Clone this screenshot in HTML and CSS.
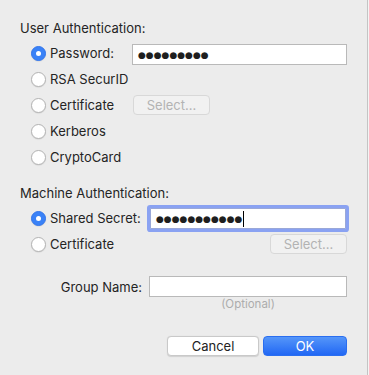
FILE: index.html
```html
<!DOCTYPE html>
<html lang="en">
<head>
    <meta charset="UTF-8">
    <meta name="viewport" content="width=device-width, initial-scale=1.0">
    <title>Authentication</title>
    <link rel="stylesheet" href="styles.css">
</head>
<body>
    <div class="dialog">
        <div class="section-title first">User Authentication:</div>
        <div class="option">
            <span class="radio checked"></span>
            <span class="label label-password">Password:</span>
            <div class="field field-password"><span class="dots">●●●●●●●●●</span></div>
        </div>
        <div class="option">
            <span class="radio"></span>
            <span class="label">RSA SecurID</span>
        </div>
        <div class="option">
            <span class="radio"></span>
            <span class="label label-cert">Certificate</span>
            <button class="select-btn">Select...</button>
        </div>
        <div class="option">
            <span class="radio"></span>
            <span class="label">Kerberos</span>
        </div>
        <div class="option">
            <span class="radio"></span>
            <span class="label">CryptoCard</span>
        </div>

        <div class="section-title">Machine Authentication:</div>
        <div class="option">
            <span class="radio checked"></span>
            <span class="label label-secret">Shared Secret:</span>
            <div class="field field-secret focused"><span class="dots">●●●●●●●●●●●</span><span class="caret"></span></div>
        </div>
        <div class="option">
            <span class="radio"></span>
            <span class="label">Certificate</span>
            <button class="select-btn push-right">Select...</button>
        </div>

        <div class="group-row">
            <span class="group-label">Group Name:</span>
            <div class="field field-group"></div>
        </div>
        <div class="hint">(Optional)</div>

        <div class="buttons">
            <button class="btn btn-cancel">Cancel</button>
            <button class="btn btn-ok">OK</button>
        </div>
    </div>
</body>
</html>
```

FILE: styles.css
```css
html, body {
    margin: 0;
    height: 100%;
    background-color: #f4f4f4;
}
body {
    font-family: Inter, 'Liberation Sans', Arial, sans-serif;
    font-size: 13px;
    color: #242424;
}
.dialog {
    box-sizing: border-box;
    width: 368px;
    height: 375px;
    background-color: #ececec;
    border-right: 1px solid #c4c4c4;
    padding: 20px 20px 0 0;
}
.section-title {
    line-height: 16px;
    padding-left: 20px;
    margin-top: 15px;
}
.section-title.first {
    margin-top: 0;
}
.option {
    display: flex;
    align-items: center;
    height: 26px;
    padding-left: 31px;
}
.section-title + .option {
    margin-top: 4px;
}
.radio {
    box-sizing: border-box;
    width: 15px;
    height: 15px;
    border-radius: 50%;
    background-color: #fff;
    border: 1px solid #b4b4b4;
    box-shadow: 0 0.5px 1px rgba(0, 0, 0, 0.12);
    margin-right: 4px;
    display: flex;
    align-items: center;
    justify-content: center;
    flex-shrink: 0;
}
.radio.checked {
    background-color: #3a82f7;
    border-color: #3276ee;
}
.radio.checked::after {
    content: "";
    width: 5px;
    height: 5px;
    border-radius: 50%;
    background-color: #fff;
}
.label-password {
    width: 82px;
}
.label-cert {
    width: 83px;
}
.label-secret {
    width: 100px;
}
.field {
    box-sizing: border-box;
    height: 21px;
    background-color: #fff;
    border: 1px solid #b9b9b9;
    display: flex;
    align-items: center;
    padding-left: 5px;
}
.field-password {
    flex: 1;
    margin-top: 3px;
}
.field-secret {
    flex: 1;
    margin-top: 1px;
    margin-right: 1px;
    border-color: #9aa8d8;
}
.focused {
    box-shadow: 0 0 0 3px #8aa2f2;
    border-radius: 1px;
}
.dots {
    font-family: 'DejaVu Sans', sans-serif;
    font-size: 9px;
    letter-spacing: 0;
    color: #1e1e1e;
}
.caret {
    width: 1px;
    height: 16px;
    background-color: #000;
    margin-left: 1px;
}
.select-btn {
    box-sizing: border-box;
    width: 77px;
    height: 20px;
    margin-top: -1px;
    font-family: inherit;
    font-size: 13px;
    color: #b3b3b3;
    background-color: #f1f1f1;
    border: 1px solid #d8d8d8;
    border-radius: 4px;
    padding: 0;
}
.push-right {
    margin-left: auto;
}
.group-row {
    display: flex;
    align-items: center;
    margin-top: 19px;
    padding-left: 20px;
}
.group-label {
    width: 122px;
    text-align: right;
    margin-right: 7px;
}
.field-group {
    flex: 1;
    height: 21px;
}
.hint {
    line-height: 14px;
    font-size: 11.5px;
    color: #acacac;
    padding-left: 149px;
    text-align: center;
}
.buttons {
    display: flex;
    justify-content: flex-end;
    gap: 4px;
    margin-top: 25px;
}
.btn {
    box-sizing: border-box;
    height: 20px;
    font-family: inherit;
    font-size: 13px;
    border-radius: 4px;
    padding: 0;
}
.btn-cancel {
    width: 92px;
    color: #222;
    background-color: #fff;
    border: 1px solid #c9c9c9;
    box-shadow: 0 0.5px 1px rgba(0, 0, 0, 0.12);
}
.btn-ok {
    width: 84px;
    color: #fff;
    background: linear-gradient(#5596f9, #2167f4);
    border: 1px solid #2a6ef0;
}
```
